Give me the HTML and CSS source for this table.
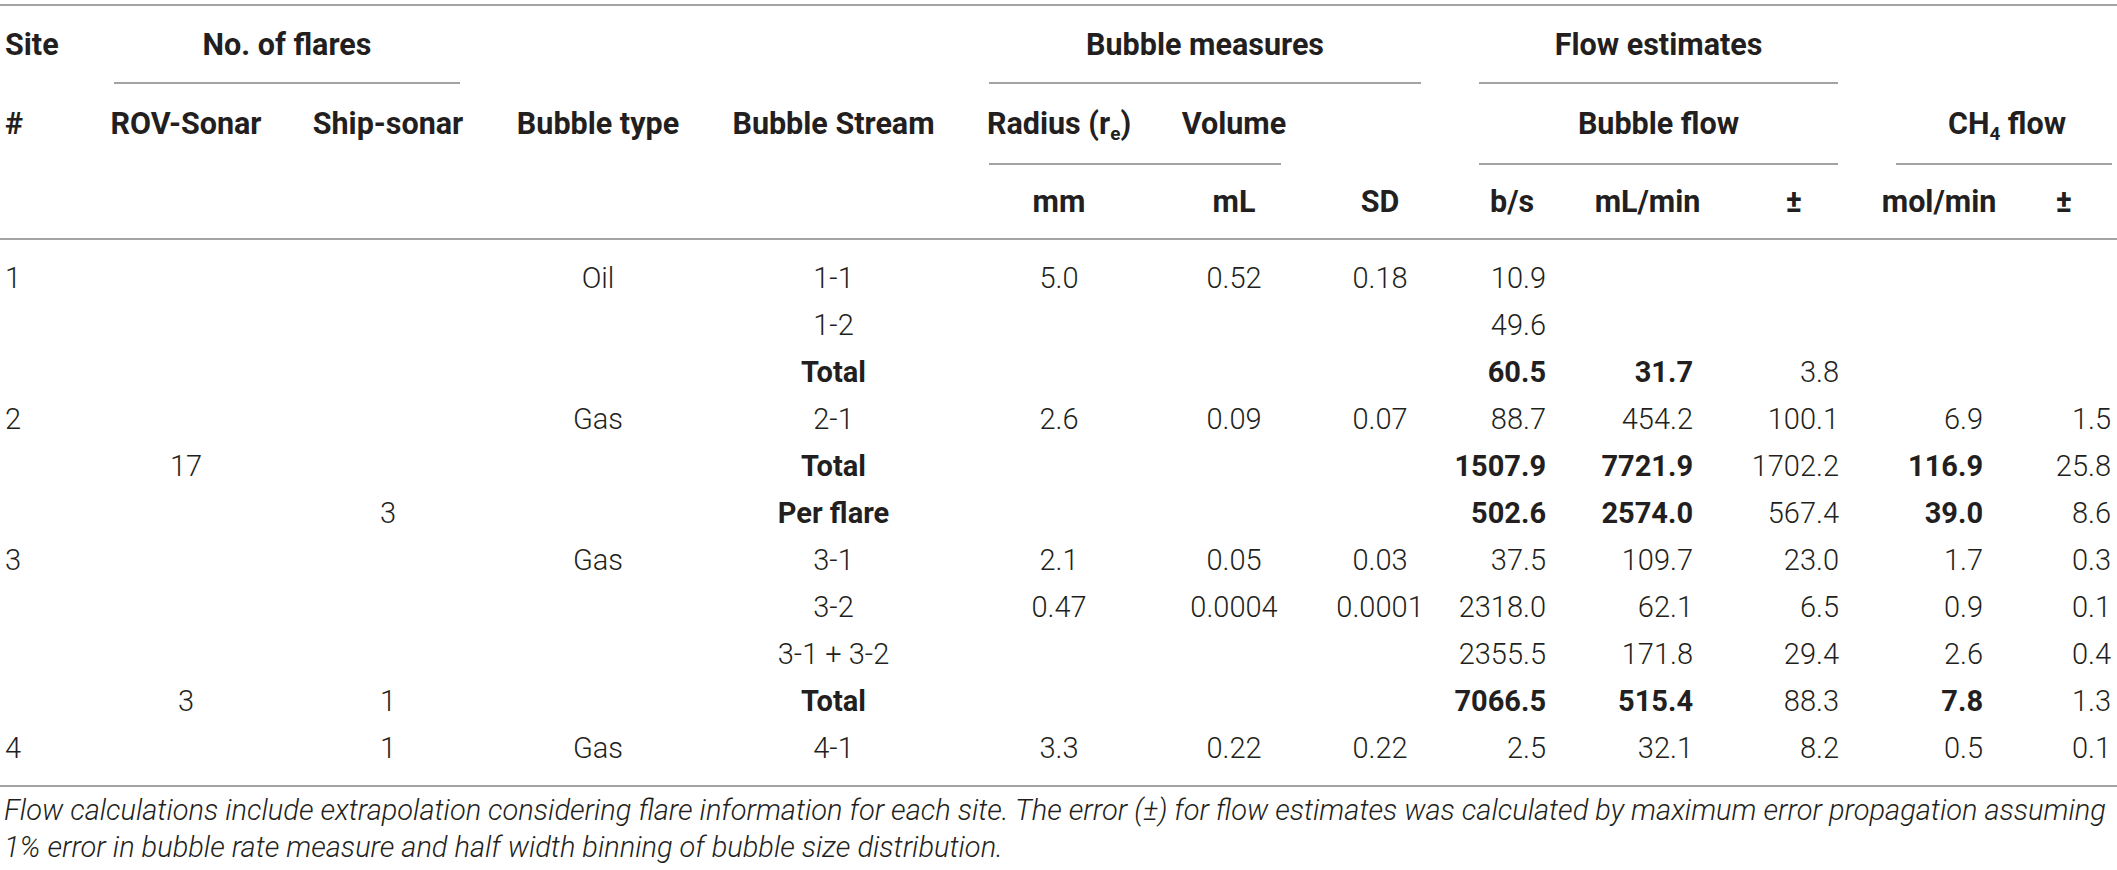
FILE: index.html
```html
<!DOCTYPE html>
<html>
<head>
    <title>Flow estimates</title>
    <link rel="stylesheet" href="styles.css">
</head>
<body>
    <table id="flow-table">
        <colgroup>
            <col style="width: 85px">
            <col style="width: 202px">
            <col style="width: 202px">
            <col style="width: 218px">
            <col style="width: 253px">
            <col style="width: 198px">
            <col style="width: 152px">
            <col style="width: 140px">
            <col style="width: 124px">
            <col style="width: 147px">
            <col style="width: 146px">
            <col style="width: 144px">
            <col style="width: 106px">
        </colgroup>
        <thead>
            <tr class="h1">
                <th class="left">Site</th>
                <th colspan="2">No. of flares</th>
                <th></th>
                <th></th>
                <th colspan="3">Bubble measures</th>
                <th colspan="3">Flow estimates</th>
                <th colspan="2"></th>
            </tr>
            <tr class="rule">
                <td></td>
                <td colspan="2"><div class="line"></div></td>
                <td></td>
                <td></td>
                <td colspan="3"><div class="line"></div></td>
                <td colspan="3"><div class="line"></div></td>
                <td colspan="2"></td>
            </tr>
            <tr class="h2">
                <th class="left">#</th>
                <th>ROV-Sonar</th>
                <th>Ship-sonar</th>
                <th>Bubble type</th>
                <th>Bubble Stream</th>
                <th>Radius (r<sub>e</sub>)</th>
                <th>Volume</th>
                <th></th>
                <th colspan="3">Bubble flow</th>
                <th colspan="2" class="ch4">CH<sub>4</sub> flow</th>
            </tr>
            <tr class="rule">
                <td></td>
                <td></td>
                <td></td>
                <td></td>
                <td></td>
                <td colspan="2"><div class="line"></div></td>
                <td></td>
                <td colspan="3"><div class="line"></div></td>
                <td colspan="2"><div class="line line-end"></div></td>
            </tr>
            <tr class="h3">
                <th></th>
                <th></th>
                <th></th>
                <th></th>
                <th></th>
                <th>mm</th>
                <th>mL</th>
                <th>SD</th>
                <th>b/s</th>
                <th>mL/min</th>
                <th>±</th>
                <th>mol/min</th>
                <th class="last">±</th>
            </tr>
        </thead>
        <tbody>
            <tr>
                <td class="left">1</td><td></td><td></td><td>Oil</td><td>1-1</td>
                <td>5.0</td><td>0.52</td><td>0.18</td>
                <td class="num">10.9</td><td class="num"></td><td class="num"></td><td class="num"></td><td class="num end"></td>
            </tr>
            <tr>
                <td class="left"></td><td></td><td></td><td></td><td>1-2</td>
                <td></td><td></td><td></td>
                <td class="num">49.6</td><td class="num"></td><td class="num"></td><td class="num"></td><td class="num end"></td>
            </tr>
            <tr>
                <td class="left"></td><td></td><td></td><td></td><td><b>Total</b></td>
                <td></td><td></td><td></td>
                <td class="num"><b>60.5</b></td><td class="num"><b>31.7</b></td><td class="num">3.8</td><td class="num"></td><td class="num end"></td>
            </tr>
            <tr>
                <td class="left">2</td><td></td><td></td><td>Gas</td><td>2-1</td>
                <td>2.6</td><td>0.09</td><td>0.07</td>
                <td class="num">88.7</td><td class="num">454.2</td><td class="num">100.1</td><td class="num">6.9</td><td class="num end">1.5</td>
            </tr>
            <tr>
                <td class="left"></td><td>17</td><td></td><td></td><td><b>Total</b></td>
                <td></td><td></td><td></td>
                <td class="num"><b>1507.9</b></td><td class="num"><b>7721.9</b></td><td class="num">1702.2</td><td class="num"><b>116.9</b></td><td class="num end">25.8</td>
            </tr>
            <tr>
                <td class="left"></td><td></td><td>3</td><td></td><td><b>Per flare</b></td>
                <td></td><td></td><td></td>
                <td class="num"><b>502.6</b></td><td class="num"><b>2574.0</b></td><td class="num">567.4</td><td class="num"><b>39.0</b></td><td class="num end">8.6</td>
            </tr>
            <tr>
                <td class="left">3</td><td></td><td></td><td>Gas</td><td>3-1</td>
                <td>2.1</td><td>0.05</td><td>0.03</td>
                <td class="num">37.5</td><td class="num">109.7</td><td class="num">23.0</td><td class="num">1.7</td><td class="num end">0.3</td>
            </tr>
            <tr>
                <td class="left"></td><td></td><td></td><td></td><td>3-2</td>
                <td>0.47</td><td>0.0004</td><td>0.0001</td>
                <td class="num">2318.0</td><td class="num">62.1</td><td class="num">6.5</td><td class="num">0.9</td><td class="num end">0.1</td>
            </tr>
            <tr>
                <td class="left"></td><td></td><td></td><td></td><td>3-1 + 3-2</td>
                <td></td><td></td><td></td>
                <td class="num">2355.5</td><td class="num">171.8</td><td class="num">29.4</td><td class="num">2.6</td><td class="num end">0.4</td>
            </tr>
            <tr>
                <td class="left"></td><td>3</td><td>1</td><td></td><td><b>Total</b></td>
                <td></td><td></td><td></td>
                <td class="num"><b>7066.5</b></td><td class="num"><b>515.4</b></td><td class="num">88.3</td><td class="num"><b>7.8</b></td><td class="num end">1.3</td>
            </tr>
            <tr>
                <td class="left">4</td><td></td><td>1</td><td>Gas</td><td>4-1</td>
                <td>3.3</td><td>0.22</td><td>0.22</td>
                <td class="num">2.5</td><td class="num">32.1</td><td class="num">8.2</td><td class="num">0.5</td><td class="num end">0.1</td>
            </tr>
        </tbody>
    </table>
    <p class="note">Flow calculations include extrapolation considering flare information for each site. The error (±) for flow estimates was calculated by maximum error propagation assuming 1% error in bubble rate measure and half width binning of bubble size distribution.</p>
</body>
</html>
```

FILE: styles.css
```css
body {
    margin: 0;
    font-family: Roboto, "Liberation Sans", sans-serif;
    color: #231f20;
    background: #fff;
}
#flow-table {
    width: 2117px;
    table-layout: fixed;
    border-collapse: collapse;
    margin-top: 4px;
    border-top: 2px solid #a3a3a3;
}
#flow-table th,
#flow-table td {
    padding: 0;
    text-align: center;
    white-space: nowrap;
}
#flow-table th {
    font-size: 30.5px;
    font-weight: 700;
    vertical-align: middle;
}
#flow-table .left {
    text-align: left;
    padding-left: 5px;
}
.h1 th {
    height: 76px;
}
.h2 th {
    height: 79px;
}
.h3 th {
    height: 73px;
    border-bottom: 2px solid #a3a3a3;
}
.h3 th.last {
    padding-left: 42px;
    padding-right: 6px;
}
sub {
    font-size: 0.62em;
    vertical-align: -0.3em;
    line-height: 0;
}
.rule td {
    height: 2px;
}
.line {
    border-top: 2px solid #a3a3a3;
    margin: 0 29px;
}
.line.line-end {
    margin-right: 5px;
}
.ch4 {
    padding-left: 30px !important;
}
#flow-table tbody td {
    height: 47px;
    font-size: 29px;
    font-weight: 300;
}
#flow-table tbody td b {
    font-weight: 700;
}
#flow-table tbody td.num {
    text-align: right;
    padding-right: 28px;
}
#flow-table tbody td.end {
    padding-right: 6px;
}
#flow-table tbody tr:first-child td {
    padding-top: 14px;
}
#flow-table tbody tr:last-child td {
    padding-bottom: 14px;
    border-bottom: 2px solid #a3a3a3;
}
.note {
    margin: 0;
    padding: 5px 4px 0;
    font-size: 29px;
    font-style: italic;
    font-weight: 300;
    line-height: 37px;
}
```
